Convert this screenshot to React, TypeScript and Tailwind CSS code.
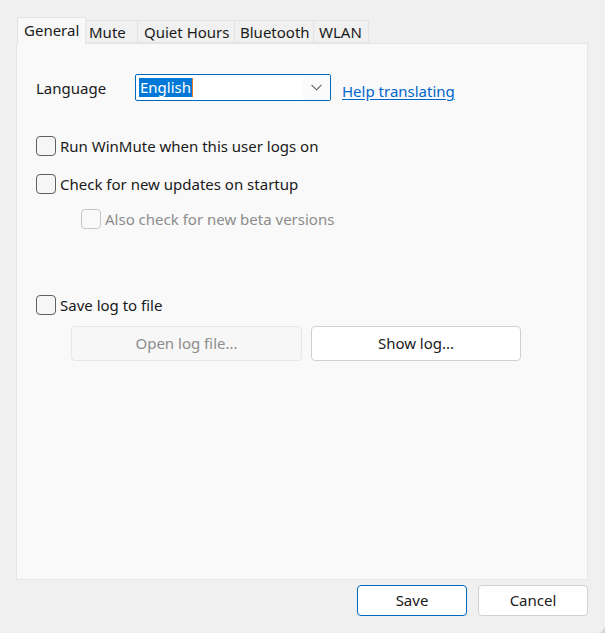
import React from "react";

const font = { fontFamily: '"Noto Sans", "Open Sans", sans-serif' };

function Check({ disabled, label }: { disabled?: boolean; label: string }) {
  return (
    <div className="flex items-center h-[20px]">
      <div
        className={
          "w-[20px] h-[20px] rounded-[4px] border box-border " +
          (disabled ? "border-[#c6c6c6] bg-[#f9f9f9]" : "border-[#5f5f5f] bg-[#f6f6f6]")
        }
      />
      <span className={"ml-[4px] text-[15px] leading-[20px] " + (disabled ? "text-[#8c8c8c]" : "text-[#1a1a1a]")}>
        {label}
      </span>
    </div>
  );
}

export default function App() {
  return (
    <div
      className="w-[605px] h-[633px] bg-[#d6d6d6] overflow-hidden"
      style={font}
    >
      <div className="w-[605px] h-[633px] bg-[#f0f0f0] rounded-br-[8px] flex flex-col pl-[16px] pr-[17px] text-[#1a1a1a]">
        {/* tabs */}
        <div className="h-[43px] flex items-end pl-[1px] text-[15px] shrink-0">
          <div className="relative z-10 -mb-px h-[27px] w-[69px] bg-[#f9f9f9] border border-b-0 border-[#e5e5e5] pl-[6px] pt-[2px] leading-[20px]">
            General
          </div>
          <div className="h-[23px] w-[52px] border border-l-0 border-[#e3e3e3] bg-[#f0f0f0] pl-[3px] leading-[22px]">Mute</div>
          <div className="h-[23px] w-[97px] border border-l-0 border-[#e3e3e3] bg-[#f0f0f0] pl-[6px] leading-[22px]">Quiet Hours</div>
          <div className="h-[23px] w-[79px] border border-l-0 border-[#e3e3e3] bg-[#f0f0f0] pl-[5px] leading-[22px]">Bluetooth</div>
          <div className="h-[23px] w-[55px] border border-l-0 border-[#e3e3e3] bg-[#f0f0f0] pl-[5px] leading-[22px]">WLAN</div>
        </div>

        {/* panel */}
        <div className="h-[537px] bg-[#f9f9f9] border border-[#e5e5e5] shrink-0 pl-[19px] flex flex-col">
          <div className="mt-[30px] flex items-center h-[27px]">
            <div className="w-[99px] text-[15px] leading-[20px] pt-[1px]">Language</div>
            <div className="w-[196px] h-[27px] border border-[#0067c0] bg-white flex items-center rounded-[2px]">
              <div className="flex-1 h-full flex items-center pl-[3px]">
                <span className="bg-[#0078d7] text-white text-[15px] leading-[19px] h-[19px] pl-[1px] pr-[1px]">English</span>
                <span className="w-[1px] h-[19px] bg-[#e07b2a]" />
              </div>
              <div className="w-[27px] h-full flex items-center justify-center bg-[#fbfbfb]">
                <svg width="11" height="7" viewBox="0 0 11 7" fill="none">
                  <path d="M0.5 0.8 L5.5 5.8 L10.5 0.8" stroke="#606060" strokeWidth="1.1" />
                </svg>
              </div>
            </div>
            <a className="ml-[11px] text-[15px] leading-[20px] text-[#0066cc] underline underline-offset-2 mt-[7px]">
              Help translating
            </a>
          </div>

          <div className="mt-[35px]">
            <Check label="Run WinMute when this user logs on" />
          </div>
          <div className="mt-[18px]">
            <Check label="Check for new updates on startup" />
          </div>
          <div className="mt-[15px] pl-[45px]">
            <Check disabled label="Also check for new beta versions" />
          </div>
          <div className="mt-[66px]">
            <Check label="Save log to file" />
          </div>
          <div className="mt-[11px] pl-[35px] flex gap-[9px]">
            <div className="w-[231px] h-[35px] rounded-[4px] border border-[#e7e7e7] bg-[#f7f7f7] flex items-center justify-center text-[15px] text-[#8c8c8c]">
              Open log file...
            </div>
            <div className="w-[210px] h-[35px] rounded-[4px] border border-[#d0d0d0] bg-white flex items-center justify-center text-[15px]">
              Show log...
            </div>
          </div>
        </div>

        {/* footer */}
        <div className="flex justify-end gap-[11px] pt-[5px]">
          <div className="w-[110px] h-[31px] rounded-[4px] border border-[#0067c0] bg-white flex items-center justify-center text-[15px]">
            Save
          </div>
          <div className="w-[110px] h-[31px] rounded-[4px] border border-[#d0d0d0] bg-white flex items-center justify-center text-[15px]">
            Cancel
          </div>
        </div>
      </div>
    </div>
  );
}
